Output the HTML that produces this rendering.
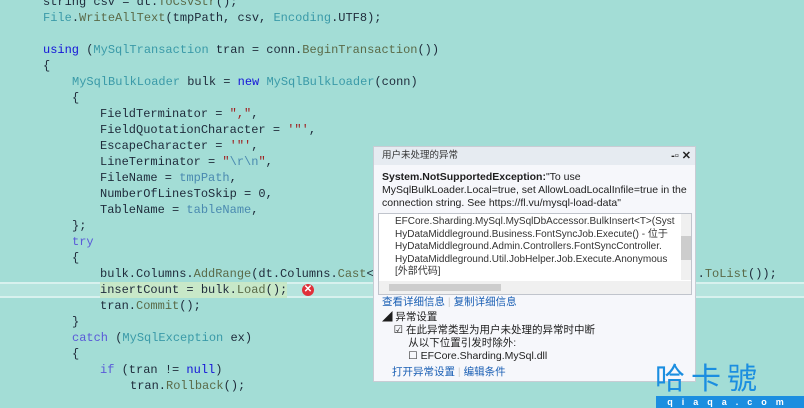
<!DOCTYPE html>
<html><head><meta charset="utf-8"><style>
body{margin:0;width:804px;height:408px;background:#a3ddd6;overflow:hidden;position:relative;font-family:"Liberation Mono",monospace;}
.l{position:absolute;left:0;white-space:pre;font-size:12px;line-height:16px;color:#1e2a3a;height:16px}
.k{color:#1414d8}.t{color:#3a9aa8}.m{color:#5a6a48}.s{color:#a02020}.e{color:#4a8ab0}
#hl{position:absolute;left:0;top:282px;width:804px;height:16px;background:#b6e4de;border-top:2px solid #d8f1ee;border-bottom:2px solid #d8f1ee;box-sizing:border-box}
#pop{position:absolute;left:373px;top:146px;width:321px;height:234px;background:#f6f7fb;border:1px solid #c8ccd4;font-family:"Liberation Sans","Noto Sans CJK SC",sans-serif;font-size:10.5px;color:#1e1e1e}
#tb{height:18px;background:#e6ebf1;line-height:18px;padding-left:8px;font-size:9.5px;color:#333}
#box{position:absolute;left:4px;top:66px;width:312px;height:80px;background:#fff;border:1px solid #c0c4cc}
a{color:#1a5fb4;text-decoration:none}
</style></head><body>
<div id="hl"></div>
<div class="l" style="top:-6px;left:43px">string csv = dt.<span class="m">ToCsvStr</span>();</div>
<div class="l" style="top:10px;left:43px"><span class="t">File</span>.<span class="m">WriteAllText</span>(tmpPath, csv, <span class="t">Encoding</span>.UTF8);</div>
<div class="l" style="top:42px;left:43px"><span class="k">using</span> (<span class="t">MySqlTransaction</span> tran = conn.<span class="m">BeginTransaction</span>())</div>
<div class="l" style="top:58px;left:43px">{</div>
<div class="l" style="top:74px;left:72px"><span class="t">MySqlBulkLoader</span> bulk = <span class="k">new</span> <span class="t">MySqlBulkLoader</span>(conn)</div>
<div class="l" style="top:90px;left:72px">{</div>
<div class="l" style="top:106px;left:100px">FieldTerminator = <span class="s">","</span>,</div>
<div class="l" style="top:122px;left:100px">FieldQuotationCharacter = <span class="s">'"'</span>,</div>
<div class="l" style="top:138px;left:100px">EscapeCharacter = <span class="s">'"'</span>,</div>
<div class="l" style="top:154px;left:100px">LineTerminator = <span class="s">"</span><span class="e">\r\n</span><span class="s">"</span>,</div>
<div class="l" style="top:170px;left:100px">FileName = <span class="e">tmpPath</span>,</div>
<div class="l" style="top:186px;left:100px">NumberOfLinesToSkip = 0,</div>
<div class="l" style="top:202px;left:100px">TableName = <span class="e">tableName</span>,</div>
<div class="l" style="top:218px;left:72px">};</div>
<div class="l" style="top:234px;left:72px"><span class="k" style="color:#5a5ad8">try</span></div>
<div class="l" style="top:250px;left:72px">{</div>
<div class="l" style="top:266px;left:100px">bulk.Columns.<span class="m">AddRange</span>(dt.Columns.<span class="m">Cast</span>&lt;</div>
<div class="l" style="top:266px;left:676px">me).<span class="m">ToList</span>());</div>
<div class="l" style="top:282px;left:100px;background:#c8e8c8">insertCount = bulk.<span class="m">Load</span>();</div>
<div style="position:absolute;left:302px;top:284px;width:12px;height:12px;border-radius:50%;background:#e0303a;color:#fff;font:bold 10px/12px 'Liberation Sans';text-align:center">✕</div>
<div class="l" style="top:298px;left:100px">tran.<span class="m">Commit</span>();</div>
<div class="l" style="top:314px;left:72px">}</div>
<div class="l" style="top:330px;left:72px"><span class="k" style="color:#5a5ad8">catch</span> (<span class="t">MySqlException</span> ex)</div>
<div class="l" style="top:346px;left:72px">{</div>
<div class="l" style="top:362px;left:100px"><span class="k" style="color:#5a5ad8">if</span> (tran != <span class="k">null</span>)</div>
<div class="l" style="top:378px;left:130px">tran.<span class="m">Rollback</span>();</div>

<div id="pop">
<div id="tb">用户未处理的异常<span style="position:absolute;right:4px;top:0;font-size:11px;font-weight:bold;color:#222">-▫ ✕</span></div>
<div style="position:absolute;left:8px;top:24px;width:310px;line-height:13px;font-size:10.5px"><b>System.NotSupportedException:</b>"To use MySqlBulkLoader.Local=true, set AllowLoadLocalInfile=true in the connection string. See https://fl.vu/mysql-load-data"</div>
<div id="box"><div style="position:absolute;left:16px;top:2px;width:280px;overflow:hidden;white-space:nowrap;line-height:12.5px;font-size:10px;color:#333">EFCore.Sharding.MySql.MySqlDbAccessor.BulkInsert&lt;T&gt;(Syst<br>HyDataMiddleground.Business.FontSyncJob.Execute() - 位于<br>HyDataMiddleground.Admin.Controllers.FontSyncController.<br>HyDataMiddleground.Util.JobHelper.Job.Execute.Anonymous<br>[外部代码]</div>
<div style="position:absolute;right:0;top:0;width:10px;height:66px;background:#f0f0f0"><div style="margin-top:22px;height:24px;background:#cdcdcd"></div></div>
<div style="position:absolute;left:0;bottom:0;width:312px;height:13px;background:#f0f0f0"><div style="margin-left:10px;margin-top:3px;width:112px;height:7px;background:#cdcdcd"></div></div></div>
<div style="position:absolute;left:8px;top:147px"><a>查看详细信息</a> <span style="color:#ccc">|</span> <a>复制详细信息</a></div>
<div style="position:absolute;left:8px;top:164px;line-height:13px">◢ 异常设置<br>&nbsp;&nbsp;&nbsp;&nbsp;☑ 在此异常类型为用户未处理的异常时中断<br>&nbsp;&nbsp;&nbsp;&nbsp;&nbsp;&nbsp;&nbsp;&nbsp;&nbsp;从以下位置引发时除外:<br>&nbsp;&nbsp;&nbsp;&nbsp;&nbsp;&nbsp;&nbsp;&nbsp;&nbsp;☐ EFCore.Sharding.MySql.dll</div>
<div style="position:absolute;left:18px;top:217px"><a>打开异常设置</a> <span style="color:#ccc">|</span> <a>编辑条件</a></div>
</div>
<div style="position:absolute;left:655px;top:360px;font:30px/32px 'Noto Sans CJK SC',sans-serif;color:#1b8ee0;letter-spacing:6px;white-space:nowrap">哈卡號</div>
<div style="position:absolute;left:656px;top:396px;width:148px;height:12px;background:#1b8ee0;color:#fff;font:bold 9px/12px 'Liberation Sans',sans-serif;letter-spacing:9px;text-align:center">qiaqa.com</div>
</body></html>
